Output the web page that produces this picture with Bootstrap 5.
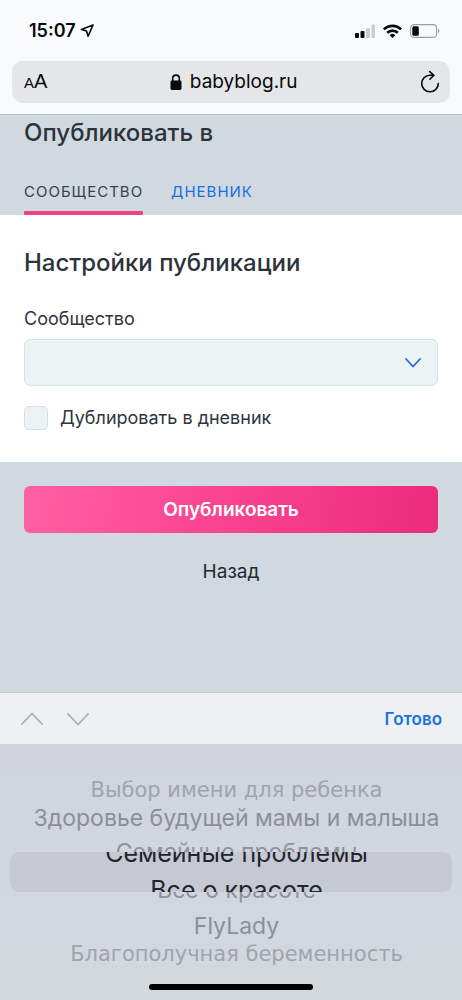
<!DOCTYPE html>
<html lang="ru">
<head>
<meta charset="utf-8">
<meta name="viewport" content="width=device-width, initial-scale=1">
<title>Опубликовать в</title>
<link href="https://cdn.jsdelivr.net/npm/bootstrap@5.3.0/dist/css/bootstrap.min.css" rel="stylesheet">
<style>
  body { font-family: Inter, "Liberation Sans", sans-serif; font-size: 18px; line-height: 24px; color: #2c323a; background: #d0d8e0; }
  button { color: inherit; }
  svg { display: block; }
  .browser-top { background: #f9fafc; border-bottom: 1px solid #bcc5cd; color: #08090b; padding-bottom: 11px; }
  .status-line { height: 61px; padding: 0 22px 0 29px; }
  .clock { font-size: 18px; font-weight: 600; }
  .address { background: #e5e6e8; border-radius: 11px; height: 42px; margin: 0 12px; padding: 0 10px 0 12px; }
  .address button { border: 0; background: none; padding: 0; }
  .host { font-size: 19px; }
  .text-size { font-family: "Liberation Sans", sans-serif; }
  .size-small { font-size: 15px; }
  .size-large { font-size: 20px; }
  h1, h2 { font-size: 24px; line-height: 32px; font-weight: 500; margin: 0; }
  .publish-head { padding: 2px 24px 0; }
  .target-tabs { gap: 28px; margin-top: 28px; }
  .target-tabs .nav-link { font-size: 15px; line-height: 30px; letter-spacing: 1px; padding: 0; color: #1a6fe0; text-transform: uppercase; }
  .target-tabs .nav-link::after { content: ""; display: block; height: 4px; margin-top: 4px; border-radius: 1px; }
  .target-tabs .nav-link.active { color: #3a414a; }
  .target-tabs .nav-link.active::after { background: #ec4386; }
  .settings { padding: 32px 24px; }
  .settings label { color: #2f353c; }
  .settings .form-select { height: 47px; border: 1px solid #d6e2e6; border-radius: 6px; background-color: #ebf3f5; background-image: url("data:image/svg+xml,%3Csvg xmlns='http://www.w3.org/2000/svg' viewBox='0 0 16 16'%3E%3Cpath fill='none' stroke='%231f6ad4' stroke-width='1.8' stroke-linecap='round' stroke-linejoin='round' d='m1 4 7 7.5L15 4'/%3E%3C/svg%3E"); background-position: right 16px center; background-size: 16px 16px; }
  .settings .form-check-input { width: 24px; height: 24px; margin: 0; border: 1px solid #d3e0e5; border-radius: 5px; background-color: #ebf3f5; }
  .actions { padding: 24px 24px 32px; }
  .btn-publish { height: 47px; border: 0; border-radius: 6px; font-size: 19px; font-weight: 600; line-height: 24px; color: #fff; background: linear-gradient(100deg, #ff60a3, #fa4590 45%, #ed2b7d); }
  .btn-back { color: #23282e; font-size: 19px; padding: 0; border: 0; line-height: 24px; margin-top: 27px; }
  .wheel-tools { background: #eff0f2; border-top: 1px solid #c3c8cd; height: 52px; padding: 0 20px 0 21px; }
  .wheel-tools button { border: 0; background: none; padding: 0; }
  .done { color: #1a73e0; font-size: 17px; font-weight: 600; }
  .wheel { background: linear-gradient(180deg, #d1d4dd, #d2d7df 60%, #d3d8dc); padding: 32px 10px 10px; text-align: center; white-space: nowrap; }
  .wheel ul { margin: 0; padding: 0; list-style: none; }
  .wheel li { overflow: hidden; padding-left: 11px; }
  .wheel .far { font-family: "DejaVu Sans", sans-serif; font-size: 21px; line-height: 28px; color: #a0a4ac; }
  .wheel .mid { font-size: 23px; line-height: 28px; color: #8b8f98; }
  .wheel .cut { font-size: 23px; color: #8f939b; }
  .wheel .cut-top { height: 20px; line-height: 40px; }
  .wheel .cut-bottom { height: 20px; display: flex; align-items: flex-end; justify-content: center; line-height: 44px; }
  .wheel .band { height: 40px; border-radius: 9px; background: #c6c9d3; color: #22252c; font-size: 25px; display: flex; flex-direction: column; justify-content: center; }
  .wheel .band span { display: block; line-height: 37px; }
  .home-bar { width: 37%; height: 6px; border-radius: 3px; background: #000; margin: 16px auto 0; }
</style>
</head>
<body>
<div class="min-vh-100 d-flex flex-column">
  <header class="browser-top">
    <div class="status-line d-flex align-items-center justify-content-between">
      <div class="d-flex align-items-center gap-1">
        <span class="clock">15:07</span>
        <svg width="14" height="14" viewBox="0 0 14 14" fill="none" stroke="#08090b" stroke-width="1.6" stroke-linejoin="round" aria-hidden="true"><path d="M13 .9 1.400 5.500l5.100 1.600 1.600 5.200z"/></svg>
      </div>
      <div class="d-flex align-items-center gap-2" aria-hidden="true">
        <svg width="20" height="14" viewBox="0 0 20 14"><g fill="#08090b"><rect y="9" width="4" height="5" rx="1"/><rect x="5.5" y="7" width="4" height="7" rx="1"/></g><g fill="#cbccce"><rect x="11" y="4" width="4" height="10" rx="1"/><rect x="16.5" y="0.5" width="3.5" height="13.5" rx="1"/></g></svg>
        <svg width="19" height="14" viewBox="0 0 19 14" fill="none" stroke="#08090b" stroke-width="2.7"><path d="M.9 5.300a12.300 12.300 0 0 1 17.200 0M4.200 8.800a7.600 7.600 0 0 1 10.600 0"/><path d="M9.500 14 6.700 11.200a4 4 0 0 1 5.600 0z" fill="#08090b" stroke="none"/></svg>
        <svg width="30" height="14" viewBox="0 0 30 14"><rect x=".6" y=".6" width="26" height="12.8" rx="3.5" fill="none" stroke="#9b9da0" stroke-width="1.1"/><rect x="2.3" y="2.3" width="6.5" height="9.4" rx="1.5" fill="#08090b"/><path d="M28 4.8c1.8.6 1.8 3.8 0 4.4z" fill="#9b9da0"/></svg>
      </div>
    </div>
    <div class="address d-flex align-items-center justify-content-between">
      <button type="button" class="text-size" aria-label="Размер текста"><span class="size-small">A</span><span class="size-large">A</span></button>
      <button type="button" class="host d-flex align-items-center gap-2">
        <svg width="12" height="16" viewBox="0 0 12 16" aria-hidden="true"><rect x=".5" y="6.5" width="11" height="9.5" rx="1.4" fill="#08090b"/><path d="M2.7 7V4.4a3.3 3.3 0 0 1 6.6 0V7" fill="none" stroke="#08090b" stroke-width="1.6"/></svg>
        <span>babyblog.ru</span>
      </button>
      <button type="button" aria-label="Обновить">
        <svg width="20" height="24" viewBox="0 0 20 24" fill="none" stroke="#08090b" stroke-width="1.6" stroke-linecap="round" stroke-linejoin="round"><path d="M18.3 13.5a8.3 8.3 0 1 1-8.3-8.3h3.5M9.7 1.6l4.2 3.7-4 4"/></svg>
      </button>
    </div>
  </header>

  <main class="flex-grow-1">
    <section class="publish-head">
      <h1>Опубликовать в</h1>
      <nav class="nav target-tabs">
        <a class="nav-link active" href="#community" aria-current="page">Сообщество</a>
        <a class="nav-link" href="#diary">Дневник</a>
      </nav>
    </section>
    <form>
      <section class="settings bg-white" id="community">
        <h2>Настройки публикации</h2>
        <label for="group" class="d-block mt-4 pt-1 pb-2">Сообщество</label>
        <select id="group" class="form-select"><option></option></select>
        <div class="d-flex align-items-center gap-2 mt-3 pt-1">
          <input class="form-check-input" type="checkbox" id="copy">
          <label for="copy" class="ps-1">Дублировать в дневник</label>
        </div>
      </section>
      <section class="actions text-center">
        <button type="submit" class="btn btn-publish w-100">Опубликовать</button>
        <button type="button" class="btn btn-back">Назад</button>
      </section>
    </form>
  </main>

  <footer>
    <div class="wheel-tools d-flex align-items-center justify-content-between">
      <div class="d-flex gap-4">
        <button type="button" aria-label="Предыдущее поле"><svg width="22" height="14" viewBox="0 0 22 14" fill="none" stroke="#aaadb1" stroke-width="1.8" stroke-linecap="round" stroke-linejoin="round"><path d="M1 12 11 1.500 21 12"/></svg></button>
        <button type="button" aria-label="Следующее поле"><svg width="22" height="14" viewBox="0 0 22 14" fill="none" stroke="#aaadb1" stroke-width="1.8" stroke-linecap="round" stroke-linejoin="round"><path d="M1 2l10 10.500L21 2"/></svg></button>
      </div>
      <button type="button" class="done">Готово</button>
    </div>
    <div class="wheel">
      <ul>
        <li class="far">Выбор имени для ребенка</li>
        <li class="mid">Здоровье будущей мамы и малыша</li>
        <li class="cut cut-top">Семейные проблемы</li>
        <li class="band"><span>Семейные проблемы</span><span>Все о красоте</span></li>
        <li class="cut cut-bottom">Все о красоте</li>
        <li class="mid">FlyLady</li>
        <li class="far">Благополучная беременность</li>
      </ul>
      <div class="home-bar"></div>
    </div>
  </footer>
</div>
<script src="https://cdn.jsdelivr.net/npm/bootstrap@5.3.0/dist/js/bootstrap.bundle.min.js"></script>
</body>
</html>
